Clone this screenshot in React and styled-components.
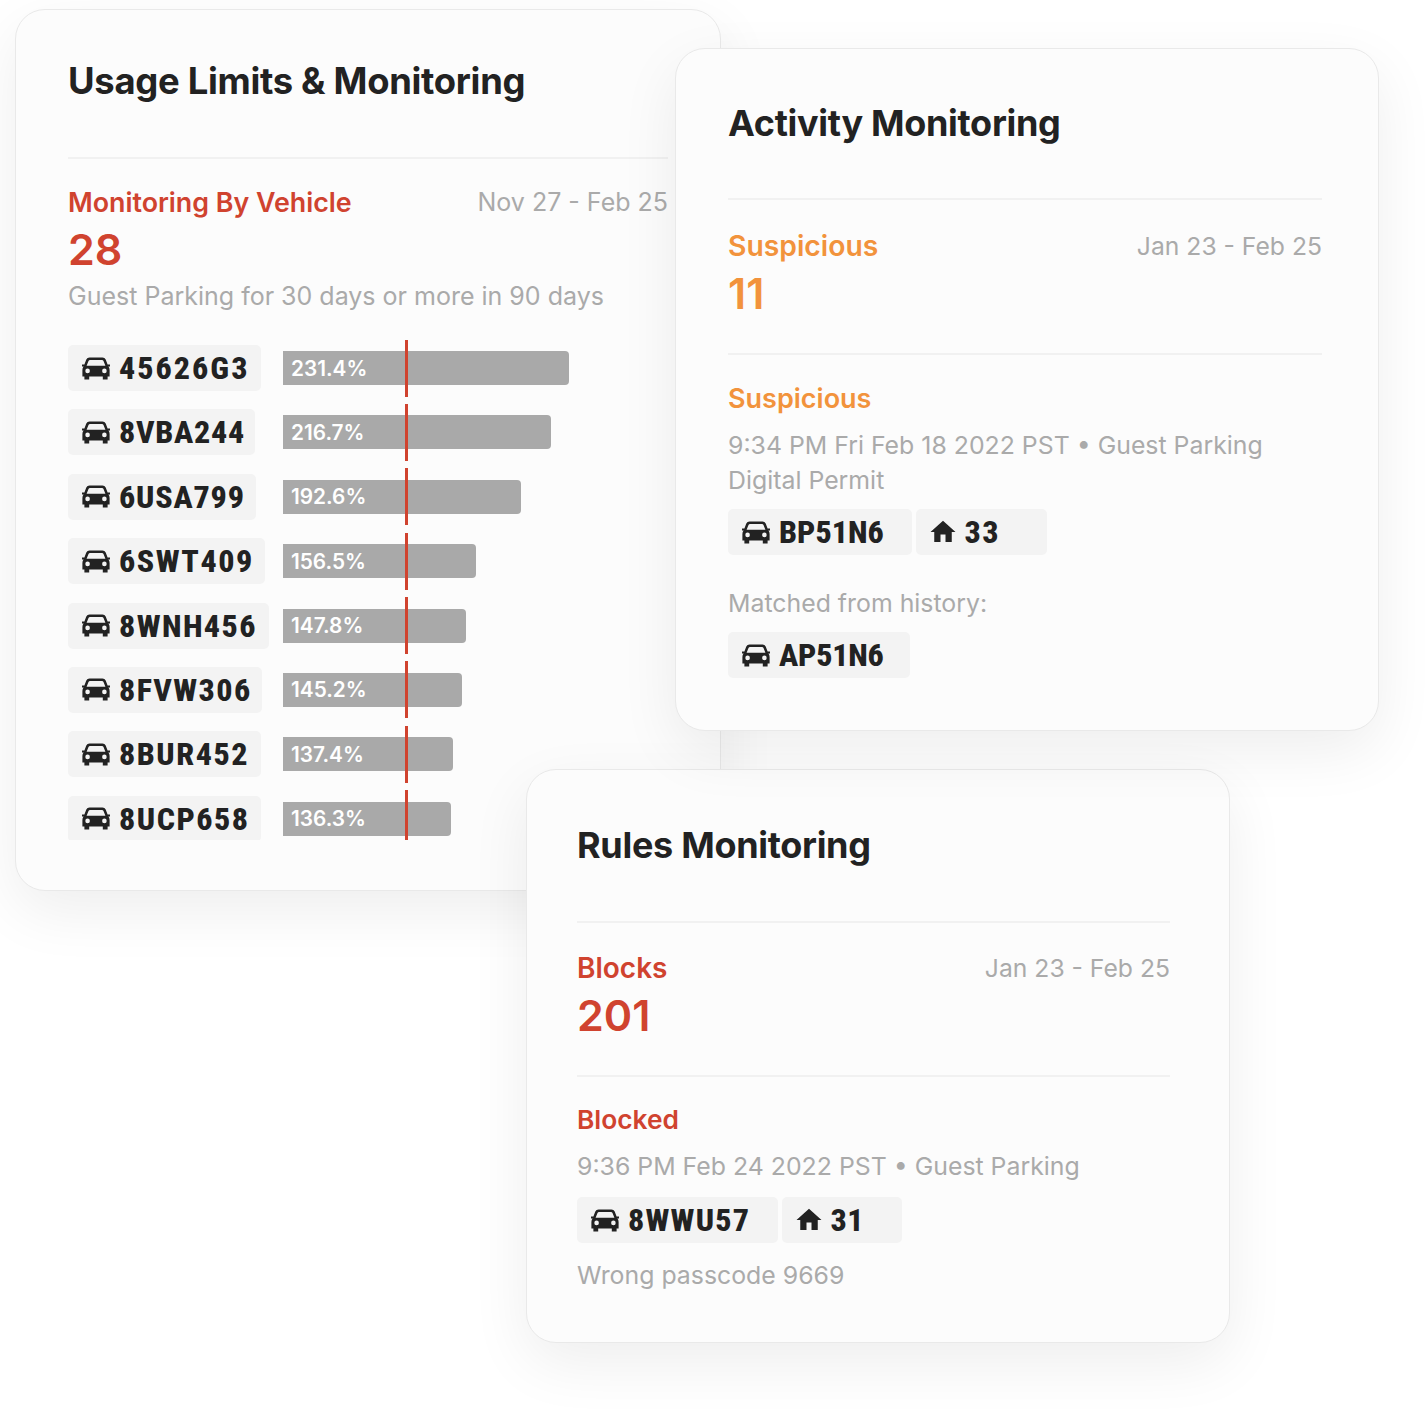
import React from "react";
import styled, { createGlobalStyle } from "styled-components";
import { MdHome } from "react-icons/md";

const Global = createGlobalStyle`
  html, body { margin: 0; background: #fff; }
  body { font-family: Inter, "Liberation Sans", sans-serif; }
`;

const Canvas = styled.div`
  position: relative;
  width: 1428px;
  height: 1416px;
  overflow: hidden;
  background: #fff;
`;

const Card = styled.section`
  position: absolute;
  left: ${(p) => p.$x}px;
  top: ${(p) => p.$y}px;
  width: ${(p) => p.$w}px;
  height: ${(p) => p.$h}px;
  box-sizing: border-box;
  padding: ${(p) => p.$pad};
  background: #fcfcfc;
  border: 1.5px solid #e9e9e9;
  border-radius: 30px;
  box-shadow: 0 20px 60px rgba(0, 0, 0, 0.07);
`;

const Title = styled.h2`
  margin: 0;
  font-size: ${(p) => p.$size || 36}px;
  line-height: 44px;
  font-weight: 650;
  letter-spacing: -0.3px;
  color: #222222;
`;

const Divider = styled.hr`
  margin: ${(p) => p.$mt}px 0 0;
  border: 0;
  height: 2px;
  background: #f1f1f1;
`;

const Head = styled.div`
  display: flex;
  justify-content: space-between;
  align-items: center;
  margin-top: ${(p) => p.$mt}px;
  height: 34px;
`;

const Label = styled.div`
  font-size: ${(p) => p.$size}px;
  line-height: 34px;
  font-weight: 600;
  color: ${(p) => p.$color};
`;

const DateRange = styled.div`
  font-size: ${(p) => p.$size || 24.7}px;
  line-height: 34px;
  color: #aaaaaa;
`;

const BigNumber = styled.div`
  margin-top: 5px;
  font-size: 43px;
  line-height: 50px;
  font-weight: 600;
  color: ${(p) => p.$color};
`;

const Meta = styled.p`
  margin: ${(p) => p.$mt || 0}px 0 0;
  font-size: ${(p) => p.$size || 24.85}px;
  line-height: 35px;
  color: #aaaaaa;
`;

const SubLabel = styled(Label)`
  margin-top: ${(p) => p.$mt}px;
`;

const List = styled.div`
  margin-top: 25.5px;
  height: 500.5px;
  overflow: hidden;
  display: flex;
  flex-direction: column;
  gap: 7.4px;
`;

const Row = styled.div`
  position: relative;
  flex: none;
  height: 57px;
  display: grid;
  grid-template-columns: 215px 1fr;
  align-items: center;
`;

const Plate = styled.div`
  display: inline-flex;
  align-items: center;
  box-sizing: border-box;
  height: 46px;
  width: ${(p) => p.$w}px;
  padding: 0 0 0 14px;
  gap: 9px;
  background: #f3f3f3;
  border-radius: 5px;
  justify-self: start;
  color: #222222;
  overflow: hidden;
  white-space: nowrap;
  svg { flex: none; }
`;

const PlateText = styled.span`
  font-family: Roboto, "Liberation Sans", sans-serif;
  font-stretch: 75%;
  font-weight: 800;
  font-size: 32px;
  letter-spacing: ${(p) => p.$ls}px;
`;

const HomeIcon = styled(MdHome)`
  margin: 0 -2px 0 -2.5px;
`;

const PlateRow = styled.div`
  display: flex;
  gap: 4px;
  margin-top: ${(p) => p.$mt || 0}px;
`;

const Bar = styled.div`
  height: 34px;
  display: flex;
  align-items: center;
  box-sizing: border-box;
  padding-left: 8px;
  background: #a9a9a9;
  border-radius: 0 4px 4px 0;
  color: #ffffff;
  font-size: 20.8px;
  font-weight: 600;
`;

const Limit = styled.div`
  position: absolute;
  left: 337px;
  top: 0;
  bottom: 0;
  width: 3px;
  background: #d0432f;
`;

const RED = "#d0432f";
const ORANGE = "#f2933c";

const rows = [
  ["45626G3", 231.4, 193, 286, 2],
  ["8VBA244", 216.7, 187, 267.5, 0.7],
  ["6USA799", 192.6, 188, 238, 0.8],
  ["6SWT409", 156.5, 197, 193, 1.5],
  ["8WNH456", 147.8, 201, 182.5, 1.4],
  ["8FVW306", 145.2, 194, 179, 1.4],
  ["8BUR452", 137.4, 193, 170, 1.5],
  ["8UCP658", 136.3, 193, 168, 1.5],
];

const CarIcon = () => (
  <svg width="28" height="23" viewBox="0 0 28 23" fill="currentColor" aria-hidden="true">
    <path
      fillRule="evenodd"
      d="M7.5 0.5H20.5Q22.8 0.5 23.7 2.6L25.6 7.4H28V9.6H26.4Q27.6 11 27.6 13V19.5H25.6V22.5H20.8V19.5H7.2V22.5H2.4V19.5H0.4V13Q0.4 11 1.6 9.6H0V7.4H2.4L4.3 2.6Q5.2 0.5 7.5 0.5ZM8 3H20Q21 3 21.5 4L23.4 8.8H4.6L6.5 4Q7 3 8 3ZM5.6 11.6A2.3 2.3 0 1 0 5.6 16.2A2.3 2.3 0 1 0 5.6 11.6ZM22.4 11.6A2.3 2.3 0 1 0 22.4 16.2A2.3 2.3 0 1 0 22.4 11.6Z"
    />
  </svg>
);

const CarPlate = ({ text, w, ls = 1.5 }) => (
  <Plate $w={w}>
    <CarIcon />
    <PlateText $ls={ls}>{text}</PlateText>
  </Plate>
);

const UnitPlate = ({ text, w, ls = 1.5 }) => (
  <Plate $w={w}>
    <HomeIcon size={30} />
    <PlateText $ls={ls}>{text}</PlateText>
  </Plate>
);

export default function App() {
  return (
    <Canvas>
      <Global />
      <Card $x={15} $y={9} $w={706} $h={882} $pad="49px 52px 0">
        <Title $size={36.4}>Usage Limits &amp; Monitoring</Title>
        <Divider $mt={54} />
        <Head $mt={26}>
          <Label $color={RED} $size={26.8}>Monitoring By Vehicle</Label>
          <DateRange $size={25}>Nov 27 - Feb 25</DateRange>
        </Head>
        <BigNumber $color={RED}>28</BigNumber>
        <Meta $mt={5} $size={25}>Guest Parking for 30 days or more in 90 days</Meta>
        <List>
          {rows.map(([plate, pct, w, barW, ls]) => (
            <Row key={plate}>
              <CarPlate text={plate} w={w} ls={ls} />
              <Bar style={{ width: barW }}>{pct}%</Bar>
              <Limit />
            </Row>
          ))}
        </List>
      </Card>

      <Card $x={526} $y={769} $w={704} $h={574} $pad="53px 59px 0 50px">
        <Title>Rules Monitoring</Title>
        <Divider $mt={54} />
        <Head $mt={28}>
          <Label $color={RED} $size={28}>Blocks</Label>
          <DateRange>Jan 23 - Feb 25</DateRange>
        </Head>
        <BigNumber $color={RED}>201</BigNumber>
        <Divider $mt={35} />
        <SubLabel $color={RED} $size={26.3} $mt={26}>Blocked</SubLabel>
        <Meta $mt={12}>9:36 PM Feb 24 2022 PST • Guest Parking</Meta>
        <PlateRow $mt={13}>
          <CarPlate text="8WWU57" w={201} ls={1.2} />
          <UnitPlate text="31" w={120} ls={0.5} />
        </PlateRow>
        <Meta $mt={15}>Wrong passcode 9669</Meta>
      </Card>

      <Card $x={675} $y={48} $w={704} $h={683} $pad="52px 56px 0 52px">
        <Title>Activity Monitoring</Title>
        <Divider $mt={53} />
        <Head $mt={29}>
          <Label $color={ORANGE} $size={28.3}>Suspicious</Label>
          <DateRange>Jan 23 - Feb 25</DateRange>
        </Head>
        <BigNumber $color={ORANGE}>11</BigNumber>
        <Divider $mt={35} />
        <SubLabel $color={ORANGE} $size={27} $mt={27}>Suspicious</SubLabel>
        <Meta $mt={12}>
          9:34 PM Fri Feb 18 2022 PST • Guest Parking
          <br />
          Digital Permit
        </Meta>
        <PlateRow $mt={11}>
          <CarPlate text="BP51N6" w={184} ls={0} />
          <UnitPlate text="33" w={131} />
        </PlateRow>
        <Meta $mt={31}>Matched from history:</Meta>
        <PlateRow $mt={11}>
          <CarPlate text="AP51N6" w={182} ls={-0.2} />
        </PlateRow>
      </Card>
    </Canvas>
  );
}
